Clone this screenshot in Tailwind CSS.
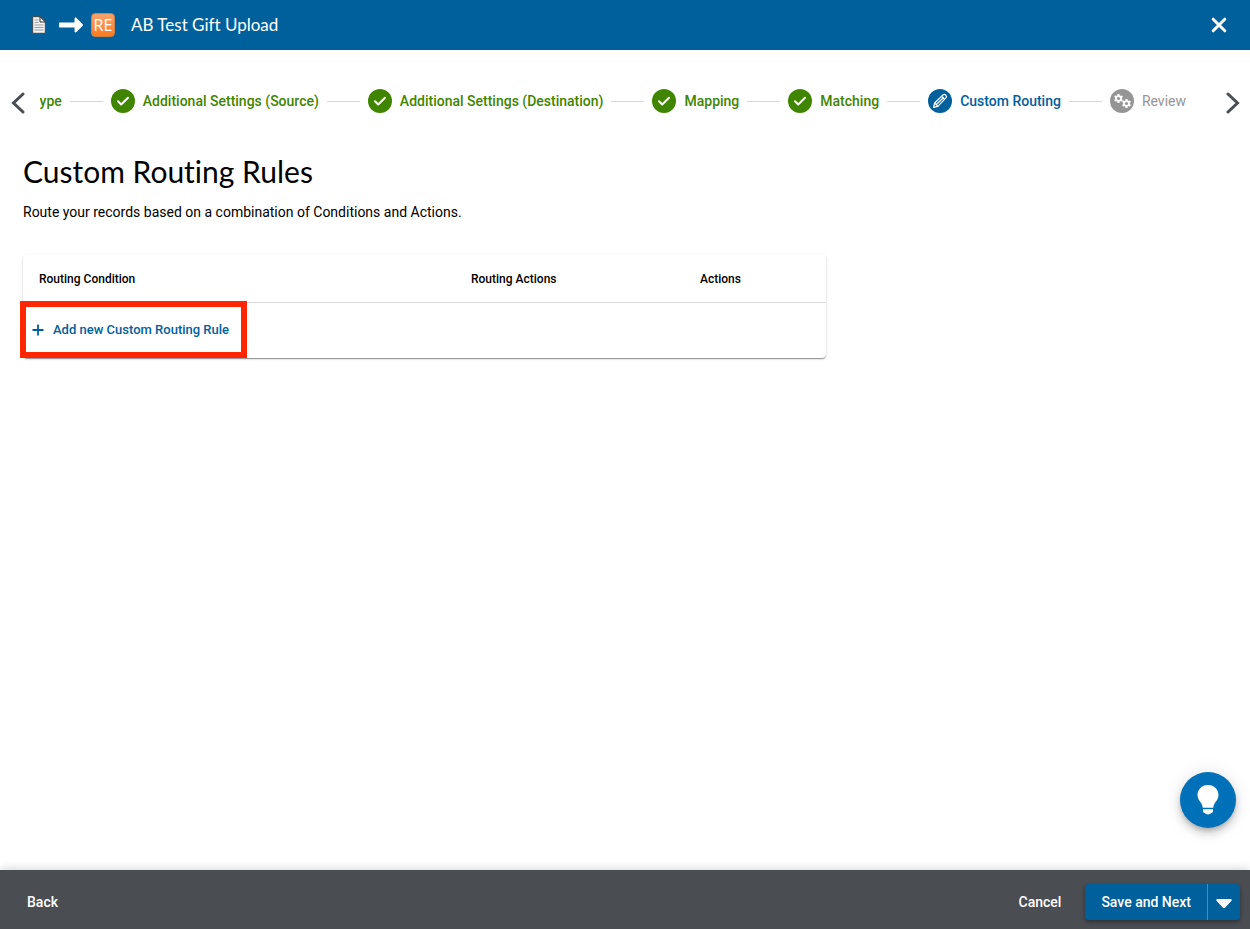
<!DOCTYPE html>
<html lang="en">
<head>
    <meta charset="UTF-8">
    <title>AB Test Gift Upload</title>
    <meta name="viewport" content="width=device-width, initial-scale=1.0">
    <script src="https://cdn.jsdelivr.net/npm/@tailwindcss/browser@4"></script>
</head>
<body class="min-h-screen flex flex-col bg-white text-black text-sm font-[Roboto,sans-serif]">

    <!-- shared icons -->
    <svg class="hidden">
        <symbol id="check" viewBox="0 0 24 24">
            <circle cx="12" cy="12" r="12" fill="#3f8500" />
            <path d="M7 12.300l3.200 3.200L17 8.700" fill="none" stroke="#fff" stroke-width="2" stroke-linecap="round" stroke-linejoin="round" />
        </symbol>
        <symbol id="gear" viewBox="-6 -6 12 12">
            <g fill="#fff">
                <rect x="-1.3" y="-5.5" width="2.6" height="11" rx=".5" />
                <rect x="-1.3" y="-5.5" width="2.6" height="11" rx=".5" transform="rotate(60)" />
                <rect x="-1.3" y="-5.5" width="2.6" height="11" rx=".5" transform="rotate(120)" />
                <circle r="4" />
            </g>
            <circle r="1.9" fill="#959595" />
        </symbol>
    </svg>

    <header class="h-[50px] flex items-center pl-8 pr-[19px] bg-[#00609c] text-white">
        <svg class="w-[14px] h-[18px]" viewBox="0 0 14 18">
            <path d="M.7.7h7.800l4.800 5v11.600H.7z" fill="#f4f4f4" stroke="#444" />
            <path d="M8 .7v5.300h5.300z" fill="#fff" stroke="#333" />
            <path d="M2.500 4h4M2.500 6.500h4M2.500 9h9M2.500 11.500h9M2.500 14h9" stroke="#999" />
        </svg>
        <svg class="w-6 h-4 ml-[13px]" viewBox="0 0 24 16">
            <path d="M1 5.500h14.500V2.200c0-1.600 1-2 2-1.200l6 6c.6.6.6 1.300 0 2l-6 6c-1 .8-2 .4-2-1.200v-3.300H1c-.6 0-1-.4-1-1v-3c0-.6.4-1 1-1z" fill="#fff" />
        </svg>
        <span class="w-6 h-6 ml-2 flex items-center justify-center rounded-sm border border-[#c9824e] bg-linear-to-b from-[#f5a36c] to-[#ff7a12] text-base leading-none font-['Open_Sans',sans-serif]">RE</span>
        <span class="ml-4 pb-px text-[17px] leading-6 font-[Lato,sans-serif] [font-variant-ligatures:none]">AB Test Gift Upload</span>
        <button class="ml-auto p-1" aria-label="Close">
            <svg class="w-4 h-4" viewBox="0 0 16 16"><path d="M2.200 2.200l11.600 11.600M13.800 2.200L2.200 13.800" stroke="#fff" stroke-width="3" stroke-linecap="round" /></svg>
        </button>
    </header>

    <!-- wizard steps, the first one is scrolled partly out of view -->
    <nav class="mt-9 flex items-center">
        <button class="w-10 pl-[11px] pt-1 shrink-0" aria-label="Previous steps">
            <svg class="w-[14px] h-[22px]" viewBox="0 0 14 22"><path d="M12 2L2.500 11 12 20" fill="none" stroke="#4a4d52" stroke-width="3" stroke-linecap="round" /></svg>
        </button>
        <ol class="grow h-[30px] min-w-0 overflow-hidden flex items-center justify-end gap-2 pr-6 font-medium text-[#3f8500] whitespace-nowrap">
            <li>Type</li>
            <li class="w-[33px] h-px shrink-0 bg-[#d7d8d9]"></li>
            <li class="flex items-center gap-2"><svg class="w-6 h-6"><use href="#check" /></svg>Additional Settings (Source)</li>
            <li class="w-[33px] h-px shrink-0 bg-[#d7d8d9]"></li>
            <li class="flex items-center gap-2"><svg class="w-6 h-6"><use href="#check" /></svg>Additional Settings (Destination)</li>
            <li class="w-[33px] h-px shrink-0 bg-[#d7d8d9]"></li>
            <li class="flex items-center gap-2"><svg class="w-6 h-6"><use href="#check" /></svg>Mapping</li>
            <li class="w-[33px] h-px shrink-0 bg-[#d7d8d9]"></li>
            <li class="flex items-center gap-2"><svg class="w-6 h-6"><use href="#check" /></svg>Matching</li>
            <li class="w-[33px] h-px shrink-0 bg-[#d7d8d9]"></li>
            <li class="flex items-center gap-2 text-[#00609c]">
                <svg class="w-6 h-6" viewBox="0 0 24 24">
                    <circle cx="12" cy="12" r="12" fill="#00609c" />
                    <g fill="none" stroke="#fff" stroke-width="1.2" stroke-linejoin="round">
                        <path d="M5.600 18.400l1-4.400 8.600-8.200c1.600-1.400 4.300 1.200 2.900 2.900L9.900 17.300z" />
                        <path d="M6.600 14l3.300 3.300M8.600 15.200l7.200-7M13.600 7.400l3 3" />
                    </g>
                </svg>Custom Routing</li>
            <li class="w-[33px] h-px shrink-0 bg-[#d7d8d9]"></li>
            <li class="flex items-center gap-2 font-normal text-[#959595]">
                <svg class="w-6 h-6" viewBox="0 0 24 24">
                    <circle cx="12" cy="12" r="12" fill="#959595" />
                    <use href="#gear" x="3.5" y="4.5" width="10" height="10" />
                    <use href="#gear" x="11.5" y="9.5" width="10" height="10" />
                </svg>Review</li>
        </ol>
        <button class="w-10 pl-4 pt-1 shrink-0" aria-label="Next steps">
            <svg class="w-[14px] h-[22px]" viewBox="0 0 14 22"><path d="M2 2l9.500 9L2 20" fill="none" stroke="#4a4d52" stroke-width="3" stroke-linecap="round" /></svg>
        </button>
    </nav>

    <main class="grow px-[23px] pt-[35px]">
        <h1 class="text-[30px] leading-10 font-[Lato,sans-serif] [font-variant-ligatures:none]">Custom Routing Rules</h1>
        <p class="mt-[11px] leading-5">Route your records based on a combination of Conditions and Actions.</p>

        <div class="mt-[33px] max-w-[803px] rounded-sm shadow-[0_2px_1px_-1px_rgba(0,0,0,0.2),0_1px_1px_rgba(0,0,0,0.2),0_1px_3px_rgba(0,0,0,0.15)]">
            <table class="w-full text-left table-fixed">
                <thead>
                    <tr class="h-[47px] text-xs border-b border-[#dcdcdc]">
                        <th class="w-[432px] pl-4 pt-px font-medium">Routing Condition</th>
                        <th class="pl-4 pt-px font-medium">Routing Actions</th>
                        <th class="w-[142px] pl-4 pt-px font-medium">Actions</th>
                    </tr>
                </thead>
                <tbody>
                    <tr class="h-14">
                        <td colspan="3" class="relative pl-2">
                            <button class="flex items-center gap-2 text-[13px] font-medium text-[#00609c]">
                                <svg class="w-[14px] h-[14px]" viewBox="0 0 14 14"><path d="M7 1.500v11M1.500 7h11" stroke="#00609c" stroke-width="1.8" /></svg>
                                Add new Custom Routing Rule
                            </button>
                            <div class="absolute -left-[3px] -top-[2px] w-[227px] h-[57px] border-6 border-[#ff2600] pointer-events-none"></div>
                        </td>
                    </tr>
                </tbody>
            </table>
        </div>
    </main>

    <!-- help bubble -->
    <button class="fixed right-[14px] bottom-[101px] w-14 h-14 rounded-full bg-[#0070b8] flex items-center justify-center shadow-[0_3px_5px_-1px_rgba(0,0,0,0.2),0_6px_10px_rgba(0,0,0,0.14),0_1px_18px_rgba(0,0,0,0.12)]" aria-label="Help">
        <svg class="w-[22px] h-[30px]" viewBox="0 0 22 30">
            <g fill="#fff">
                <path d="M11 0C4.700 0 .5 4.600.5 10c0 5.400 4.500 7 5.300 12.700h10.400C17 17 21.500 15.400 21.500 10 21.500 4.600 17.300 0 11 0z" />
                <path d="M6 24.200h10v1.800c0 1-.6 1.700-1.600 2.100-2 1.900-4.800 1.900-6.800 0C6.600 27.700 6 27 6 26z" />
            </g>
        </svg>
    </button>

    <footer class="h-[59px] px-[10px] pt-1 flex items-center bg-[#4a4d52] text-white font-medium shadow-[0_0_10px_rgba(0,0,0,0.2)]">
        <button class="h-9 px-[17px]">Back</button>
        <button class="h-9 ml-auto mr-2 px-4">Cancel</button>
        <div class="h-9 flex rounded-sm bg-[#00609c] shadow-[0_2px_4px_rgba(0,0,0,0.4)]">
            <button class="px-4">Save and Next</button>
            <button class="w-[33px] pt-1 flex items-center justify-center border-l border-[#4090bf]" aria-label="More save options">
                <svg class="w-4 h-[10px]" viewBox="0 0 16 10"><path d="M1.500 0h13c1.200 0 1.600 1.300.8 2L9 8.700c-.6.6-1.400.6-2 0L.7 2C-.1 1.300.3 0 1.500 0z" fill="#fff" /></svg>
            </button>
        </div>
    </footer>

</body>
</html>
